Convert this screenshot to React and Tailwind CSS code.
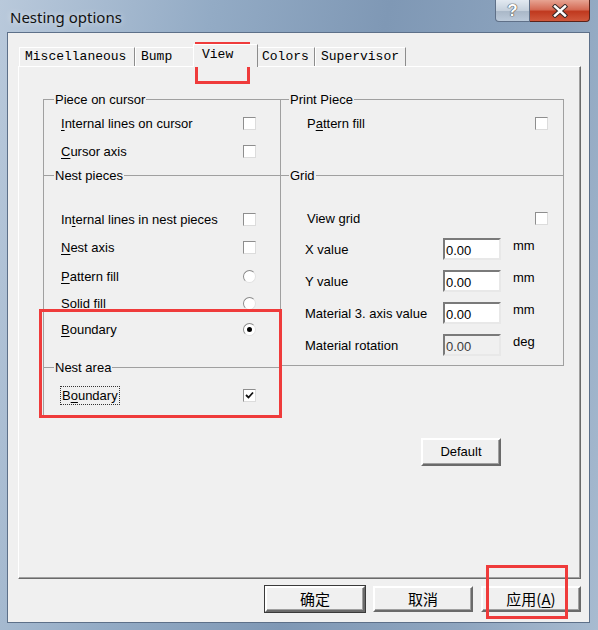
import React from 'react';

const UI = { fontFamily: '"Liberation Sans", Arial, sans-serif' };
const MONO = { fontFamily: '"Liberation Mono", "Courier New", monospace' };
const CJK = { fontFamily: '"Noto Sans CJK SC", "Liberation Sans", sans-serif' };

// mnemonic underline
const U = ({ children }) => <span className="underline underline-offset-2">{children}</span>;

const CheckBox = ({ checked }) => (
  <span className="w-[13px] h-[13px] shrink-0 bg-white border border-t-[#8e8e8e] border-l-[#8e8e8e] border-r-[#dcdcdc] border-b-[#dcdcdc] flex items-center justify-center">
    {checked && (
      <svg width="9" height="8" viewBox="0 0 9 8">
        <path d="M1 4 L3.5 6.5 L8 1.5" fill="none" stroke="#111" strokeWidth="1.8" />
      </svg>
    )}
  </span>
);

const Radio = ({ checked }) => (
  <span className="w-[13px] h-[13px] shrink-0 rounded-full bg-white border border-t-[#8a8a8a] border-l-[#8a8a8a] border-r-[#e2e2e2] border-b-[#e2e2e2] flex items-center justify-center">
    {checked && <span className="w-[5px] h-[5px] rounded-full bg-black" />}
  </span>
);

const Section = ({ title, titleLeft = 'left-[10px]', className = '', children }) => (
  <div className={`relative border-t border-[#a0a0a0] ${className}`}>
    <span className={`absolute -top-[8px] ${titleLeft} bg-[#f0f0f0] px-[1px] leading-[15px] text-[13px] text-black`}>
      {title}
    </span>
    {children}
  </div>
);

const LeftRow = ({ h, label, control }) => (
  <div className={`flex items-center pl-[17px] ${h}`}>
    <span className="w-[182px] text-[13px] leading-[15px] text-black">{label}</span>
    {control}
  </div>
);

const ValueRow = ({ label, unit, disabled }) => (
  <div className="flex items-center h-[32px] pl-[24px]">
    <span className="w-[138px] text-[13px] leading-[15px] text-black">{label}</span>
    <span
      className={`w-[58px] h-[22px] border-2 border-t-[#7a7a7a] border-l-[#7a7a7a] border-r-[#e8e8e8] border-b-[#e8e8e8] pl-[1px] pt-[3px] text-[13px] leading-[15px] ${
        disabled ? 'bg-[#f0f0f0] text-[#3c3c3c]' : 'bg-white text-black'
      }`}
    >
      0.00
    </span>
    <span className="self-start mt-[5px] ml-[12px] text-[13px] leading-[15px] text-black">{unit}</span>
  </div>
);

const Tab = ({ label, w, selected }) => (
  <div
    className={`${w} flex items-center pl-[5px] border-t border-l border-t-white border-l-white border-r border-r-[#8c8c8c] text-[13px] text-black ${
      selected ? 'h-[23px] -mx-[2px] pl-[8px] pb-[3px] bg-[#f0f0f0] relative z-10 -mb-[1px]' : 'h-[19px] bg-[#f0f0f0]'
    }`}
    style={MONO}
  >
    {label}
  </div>
);

const WinButton = ({ children, isDefault }) => (
  <button
    className={`w-[100px] h-[26px] bg-[#f0f0f0] border-2 border-t-white border-l-white border-r-[#6a6a6a] border-b-[#6a6a6a] shadow-[inset_-1px_-1px_0_#a0a0a0] text-[15px] leading-[18px] text-black flex items-center justify-center ${
      isDefault ? 'outline outline-1 outline-[#3a3a3a]' : ''
    }`}
    style={CJK}
  >
    {children}
  </button>
);

export default function App() {
  return (
    <div
      className="relative w-[598px] h-[630px] overflow-hidden bg-[linear-gradient(100deg,#b9c9db_0%,#93abc5_30%,#7f98b5_55%,#8ea5bf_80%,#a8bbd0_100%)]"
      style={UI}
    >
      {/* title bar */}
      <div className="flex h-[32px]">
        <span
          className="ml-[10px] mt-[7px] text-[15px] leading-[20px] text-[#111] [text-shadow:0_0_6px_rgba(255,255,255,0.7)]"
          style={{ fontFamily: '"Noto Sans", "Liberation Sans", sans-serif' }}
        >
          Nesting options
        </span>
        <div className="ml-auto mr-[8px] flex h-[22px]">
          <div className="w-[35px] h-full rounded-bl-[4px] border border-t-0 border-[#5f7088] bg-[linear-gradient(180deg,#e2e9f1_0%,#c5d0dc_50%,#aab8c8_55%,#bccada_100%)] flex items-center justify-center">
            <span className="text-[17px] font-bold leading-none text-white [text-shadow:0_0_1px_#4a4a4a,0_0_1px_#4a4a4a,0_0_1px_#4a4a4a]">?</span>
          </div>
          <div className="w-[60px] h-full rounded-br-[4px] border border-l-0 border-t-0 border-[#5a231b] bg-[linear-gradient(180deg,#e7a493_0%,#d46b55_45%,#c0391f_55%,#d0583c_100%)] flex items-center justify-center">
            <svg width="20" height="14" viewBox="0 0 20 14">
              <path d="M5 2.5 L15 11.5 M15 2.5 L5 11.5" stroke="#3a2a28" strokeWidth="4.4" strokeLinecap="square" />
              <path d="M5 2.5 L15 11.5 M15 2.5 L5 11.5" stroke="#fff" strokeWidth="2.4" strokeLinecap="square" />
            </svg>
          </div>
        </div>
      </div>

      {/* client area */}
      <div className="ml-[7px] w-[583px] h-[591px] border border-[#5d7089] bg-[#f0f0f0] flex flex-col">
        {/* tabs */}
        <div className="flex items-end pt-[11px] ml-[11px] h-[33px]">
          <Tab label="Miscellaneous" w="w-[116px]" />
          <Tab label="Bump" w="w-[60px]" />
          <Tab label="View" w="w-[65px]" selected />
          <Tab label="Colors" w="w-[59px]" />
          <Tab label="Supervisor" w="w-[91px]" />
        </div>

        {/* tab panel */}
        <div className="ml-[10px] w-[563px] h-[513px] border border-t-white border-l-white border-r-[#6a6a6a] border-b-[#6a6a6a] shadow-[inset_-1px_-1px_0_#a0a0a0]">
          <div className="flex items-start pt-[32px] pl-[24px]">
            {/* left column */}
            <div className="w-[238px] border-l border-r border-b border-[#a0a0a0]">
              <Section title="Piece on cursor" className="pt-[9px] pb-[10px]">
                <LeftRow h="h-[28px]" label={<><U>I</U>nternal lines on cursor</>} control={<CheckBox />} />
                <LeftRow h="h-[28px]" label={<><U>C</U>ursor axis</>} control={<CheckBox />} />
              </Section>
              <Section title="Nest pieces" className="pt-[29px] pb-[25px]">
                <LeftRow h="h-[28px]" label={<>In<U>t</U>ernal lines in nest pieces</>} control={<CheckBox />} />
                <LeftRow h="h-[29px]" label={<><U>N</U>est axis</>} control={<CheckBox />} />
                <LeftRow h="h-[28px]" label={<><U>P</U>attern fill</>} control={<Radio />} />
                <LeftRow h="h-[26px]" label={<><U>S</U>olid fill</>} control={<Radio />} />
                <LeftRow h="h-[26px]" label={<><U>B</U>oundary</>} control={<Radio checked />} />
              </Section>
              <Section title="Nest area" className="pt-[13px] pb-[6px]">
                <LeftRow
                  h="h-[28px]"
                  label={
                    <span className="-ml-[1px] px-[1px] py-[1px] border border-dotted border-[#333]">
                      B<U>o</U>undary
                    </span>
                  }
                  control={<CheckBox checked />}
                />
              </Section>
            </div>

            {/* right column */}
            <div className="w-[283px]">
              <div className="border-r border-b border-[#a0a0a0]">
                <Section title="Print Piece" titleLeft="left-[8px]" className="pt-[9px] pb-[38px]">
                  <div className="flex items-center h-[28px] pl-[26px]">
                    <span className="w-[228px] text-[13px] leading-[15px] text-black">
                      P<U>a</U>ttern fill
                    </span>
                    <CheckBox />
                  </div>
                </Section>
                <Section title="Grid" titleLeft="left-[8px]" className="pt-[27px] pb-[4px]">
                  <div className="flex items-center h-[30px] pl-[26px]">
                    <span className="w-[228px] text-[13px] leading-[15px] text-black">View grid</span>
                    <CheckBox />
                  </div>
                  <ValueRow label="X value" unit="mm" />
                  <ValueRow label="Y value" unit="mm" />
                  <ValueRow label="Material 3. axis value" unit="mm" />
                  <ValueRow label="Material rotation" unit="deg" disabled />
                </Section>
              </div>
              <button className="mt-[72px] ml-[140px] w-[80px] h-[28px] bg-[#f0f0f0] border-2 border-t-white border-l-white border-r-[#6a6a6a] border-b-[#6a6a6a] shadow-[inset_-1px_-1px_0_#a0a0a0] text-[13px] text-black">
                Default
              </button>
            </div>
          </div>
        </div>

        {/* dialog buttons */}
        <div className="flex justify-end gap-[8px] mt-[7px] pr-[8px]">
          <WinButton isDefault>确定</WinButton>
          <WinButton>取消</WinButton>
          <WinButton>
            应用(<span className="underline underline-offset-2">A</span>)
          </WinButton>
        </div>
      </div>

      {/* red annotation boxes */}
      <div className="absolute left-[195px] top-[42px] w-[55px] h-[42px] border-[3px] border-[#ef3b3b]" />
      <div className="absolute left-[39px] top-[309px] w-[243px] h-[109px] border-[3px] border-[#ef3b3b]" />
      <div className="absolute left-[486px] top-[565px] w-[82px] h-[54px] border-[3px] border-[#ef3b3b]" />
    </div>
  );
}
